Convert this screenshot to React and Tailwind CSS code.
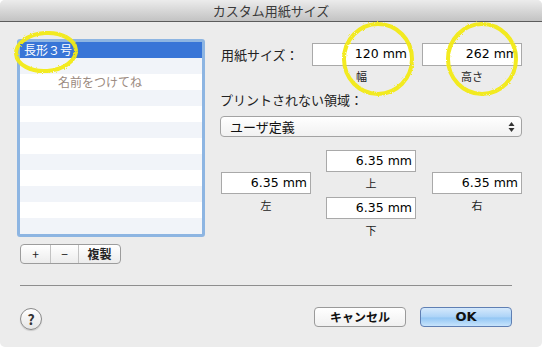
import React from "react";

const jp = "font-['Noto_Sans_CJK_JP','Noto_Sans',sans-serif]";
const num = "font-['DejaVu_Sans','Noto_Sans_CJK_JP',sans-serif]";

// 余白入力フィールド
function Field({ value, className = "" }) {
  return (
    <div
      className={`h-[22px] bg-white border border-[#a9a9a9] flex items-center justify-end pr-[3px] text-[12.5px] text-black ${num} ${className}`}
    >
      {value}
    </div>
  );
}

function Caption({ children, className = "" }) {
  return <div className={`text-[11px] leading-[14px] text-[#222] text-center ${jp} ${className}`}>{children}</div>;
}

export default function App() {
  const rows = Array.from({ length: 11 });

  return (
    <div className="w-[542px] h-[347px] bg-white">
      <div className={`relative w-[542px] h-[347px] bg-[#ececec] rounded-[5px] overflow-hidden flex flex-col ${jp}`}>
        {/* title bar */}
        <div className="h-[22px] shrink-0 bg-gradient-to-b from-[#ececec] to-[#c3c3c3] border-b border-[#5c5c5c] flex items-center justify-center text-[13px] text-[#3a3a3a]">
          カスタム用紙サイズ
        </div>

        <div className="flex pl-[17px] pt-[17px]">
          {/* left column */}
          <div className="w-[188px] flex flex-col">
            <div className="border-[3px] border-[#8db5e2] rounded-[3px] bg-white">
              <div className="h-[16px] bg-[#3875d7] text-white text-[12px] leading-[16px] pl-[4px]">長形３号</div>
              {rows.map((_, i) => (
                <div
                  key={i}
                  className={`h-[16px] text-[12px] leading-[16px] text-[#9b8a80] pl-[38px] ${i % 2 === 0 ? "bg-[#f1f4f9]" : "bg-white"}`}
                >
                  {i === 1 ? "名前をつけてね" : ""}
                </div>
              ))}
            </div>
            <div className="mt-[7px] ml-[3px] w-[101px] h-[20px] rounded-[4px] border border-[#9c9c9c] bg-gradient-to-b from-white to-[#ececec] flex text-[12px] text-[#222]">
              <div className="w-[30px] flex items-center justify-center border-r border-[#c2c2c2]">+</div>
              <div className="w-[28px] flex items-center justify-center border-r border-[#c2c2c2]">−</div>
              <div className="flex-1 flex items-center justify-center font-bold">複製</div>
            </div>
          </div>

          {/* right column */}
          <div className="ml-[15px] pt-[4px] w-[302px] flex flex-col">
            <div className="flex items-start">
              <div className="w-[92px] pt-[4px] pl-[1px] text-[13px] leading-[16px] text-[#222]">用紙サイズ：</div>
              <div className="w-[99px] flex flex-col">
                <Field value="120 mm" className="h-[23px]" />
                <Caption className="mt-[3px]">幅</Caption>
              </div>
              <div className="w-[100px] ml-[11px] flex flex-col">
                <Field value="262 mm" className="h-[23px]" />
                <Caption className="mt-[3px]">高さ</Caption>
              </div>
            </div>

            <div className="mt-[9px] text-[13px] leading-[16px] text-[#222]">プリントされない領域：</div>

            <div className="mt-[8px] h-[21px] rounded-[4px] border border-[#a3a3a3] bg-gradient-to-b from-white to-[#f1f1f1] flex items-center pl-[9px] pr-[6px] text-[13px] text-[#111]">
              <span className="flex-1">ユーザ定義</span>
              <svg width="7" height="12" viewBox="0 0 7 12">
                <path d="M3.5 1 L6.5 5 L0.5 5 Z" fill="#333" />
                <path d="M0.5 7 L6.5 7 L3.5 11 Z" fill="#333" />
              </svg>
            </div>

            <div className="mt-[13px] flex">
              <div className="ml-[1px] w-[90px] mt-[22px] flex flex-col">
                <Field value="6.35 mm" />
                <Caption className="mt-[4px]">左</Caption>
              </div>
              <div className="ml-[15px] w-[90px] flex flex-col">
                <Field value="6.35 mm" />
                <Caption className="mt-[4px]">上</Caption>
                <Field value="6.35 mm" className="mt-[7px]" />
                <Caption className="mt-[4px]">下</Caption>
              </div>
              <div className="ml-[16px] w-[90px] mt-[22px] flex flex-col">
                <Field value="6.35 mm" />
                <Caption className="mt-[4px]">右</Caption>
              </div>
            </div>
          </div>
        </div>

        {/* footer */}
        <div className="mt-[21px] mx-[20px] mr-[30px] h-px bg-[#8e8e8e]" />
        <div className="mt-[21px] flex items-start pl-[20px] pr-[30px]">
          <div className="mt-[1px] w-[22px] h-[22px] rounded-full border border-[#8a8a8a] bg-gradient-to-b from-white to-[#e6e6e6] flex items-center justify-center text-[14px] font-bold text-[#333] shadow-[0_1px_1px_rgba(0,0,0,0.15)]">
            ?
          </div>
          <div className="flex-1" />
          <div className="w-[92px] h-[20px] rounded-[4px] border border-[#9a9a9a] bg-gradient-to-b from-white to-[#f0f0f0] flex items-center justify-center text-[12px] font-bold text-[#111]">
            キャンセル
          </div>
          <div className="ml-[14px] w-[92px] h-[20px] rounded-[4px] border border-[#5f7fb3] bg-[linear-gradient(to_bottom,#d5e9fc_0%,#acd3f7_50%,#93c6f4_55%,#c7e4fc_100%)] flex items-center justify-center text-[13px] font-bold text-[#111] font-['DejaVu_Sans',sans-serif]">
            OK
          </div>
        </div>

        {/* yellow hand-drawn marks */}
        <svg className="absolute inset-0 pointer-events-none" width="542" height="347">
          <defs>
            <filter id="rough">
              <feTurbulence type="fractalNoise" baseFrequency="0.9" numOctaves="2" seed="3" />
              <feDisplacementMap in="SourceGraphic" scale="2.5" />
            </filter>
          </defs>
          <g fill="none" stroke="#f3ea12" strokeWidth="4" filter="url(#rough)" opacity="0.95">
            <ellipse cx="46" cy="52" rx="30" ry="19" transform="rotate(-4 46 52)" />
            <ellipse cx="378" cy="59" rx="34" ry="35" />
            <ellipse cx="482" cy="59" rx="34" ry="35" />
          </g>
        </svg>
      </div>
    </div>
  );
}
